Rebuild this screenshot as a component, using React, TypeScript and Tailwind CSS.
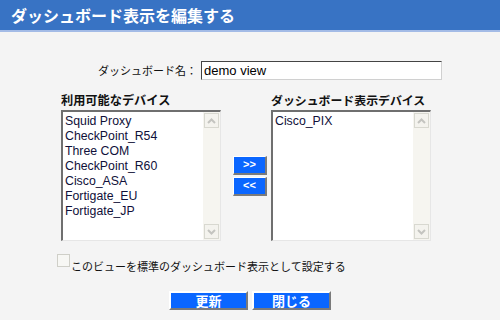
import React from "react";

const jp = { fontFamily: '"Noto Sans CJK JP", "Liberation Sans", sans-serif' };
const lat = { fontFamily: '"Liberation Sans", "Noto Sans CJK JP", sans-serif' };

const Arrow = ({ up }: { up?: boolean }) => (
  <div className="w-[15px] h-[15px] bg-[#f4f3ee] border border-[#d8d8d0] flex items-center justify-center">
    <svg width="9" height="6" viewBox="0 0 9 6">
      <path
        d={up ? "M1 5 L4.5 1.5 L8 5" : "M1 1 L4.5 4.5 L8 1"}
        fill="none"
        stroke="#c4c4c0"
        strokeWidth="2"
      />
    </svg>
  </div>
);

const ListBox = ({ items }: { items: string[] }) => (
  <div className="w-[160px] h-[131px] bg-white border-t-2 border-l-2 border-t-[#6f6f6f] border-l-[#6f6f6f] border-r border-b border-r-[#e6e6e6] border-b-[#e6e6e6] flex">
    <ul className="flex-1 pt-[2px] pl-[2px] text-[12.3px] leading-[15px] text-[#10103a]" style={lat}>
      {items.map((it) => (
        <li key={it}>{it}</li>
      ))}
    </ul>
    <div className="w-[17px] bg-[#f6f5f0] flex flex-col justify-between items-center py-[1px]">
      <Arrow up />
      <Arrow />
    </div>
  </div>
);

const MoveBtn = ({ label }: { label: string }) => (
  <button
    className="w-[34px] h-[19px] bg-[#0a66ff] text-white text-[11px] font-bold leading-none border-t border-l border-t-white border-l-white border-r-2 border-b-2 border-r-[#7a7a7a] border-b-[#7a7a7a]"
    style={lat}
  >
    {label}
  </button>
);

const BigBtn = ({ label }: { label: string }) => (
  <button
    className="w-[79px] h-[19px] bg-[#0a66ff] text-white text-[13px] font-bold leading-none border-t-2 border-l-2 border-t-white border-l-white border-r-2 border-b-2 border-r-[#7a7a7a] border-b-[#7a7a7a]"
    style={jp}
  >
    {label}
  </button>
);

export default function App() {
  return (
    <div className="w-[500px] h-[320px] bg-[#f4f4f4] overflow-hidden" style={jp}>
      <div className="h-[30px] bg-[#3873c4] flex items-center pl-[11px] text-white text-[16px] font-bold">
        ダッシュボード表示を編集する
      </div>
      <div className="h-[2px] bg-[#a3bbe6]" />

      <div className="mt-[29px] ml-[61px] flex items-center">
        <span className="w-[136px] text-right text-[11px] text-[#111]">ダッシュボード名：</span>
        <div
          className="ml-[4px] w-[241px] h-[19px] bg-white border-t border-l border-t-[#444] border-l-[#444] border-r border-b border-r-[#d0d0d0] border-b-[#d0d0d0] pl-[2px] flex items-center text-[13px] text-black"
          style={lat}
        >
          demo view
        </div>
      </div>

      <div className="mt-[13px] ml-[61px] flex">
        <div className="w-[160px]">
          <div className="text-[12.2px] font-bold leading-[14px] mb-[3px] text-[#111]">利用可能なデバイス</div>
          <ListBox
            items={[
              "Squid Proxy",
              "CheckPoint_R54",
              "Three COM",
              "CheckPoint_R60",
              "Cisco_ASA",
              "Fortigate_EU",
              "Fortigate_JP",
            ]}
          />
        </div>
        <div className="w-[50px] pl-[12px] pt-[17px] flex flex-col justify-center gap-[2px]">
          <MoveBtn label=">>" />
          <MoveBtn label="<<" />
        </div>
        <div className="w-[160px]">
          <div className="text-[11.9px] font-bold leading-[14px] mb-[3px] text-[#111]">ダッシュボード表示デバイス</div>
          <ListBox items={["Cisco_PIX"]} />
        </div>
      </div>

      <div className="mt-[13px] ml-[57px] flex items-start">
        <div className="w-[13px] h-[13px] bg-[#f7f7f4] border border-[#cfcfc8]" />
        <span className="ml-[1px] mt-[4px] text-[11px] leading-[16px] text-[#111]">
          このビューを標準のダッシュボード表示として設定する
        </span>
      </div>

      <div className="mt-[17px] flex justify-center gap-[4px]">
        <BigBtn label="更新" />
        <BigBtn label="閉じる" />
      </div>
    </div>
  );
}
